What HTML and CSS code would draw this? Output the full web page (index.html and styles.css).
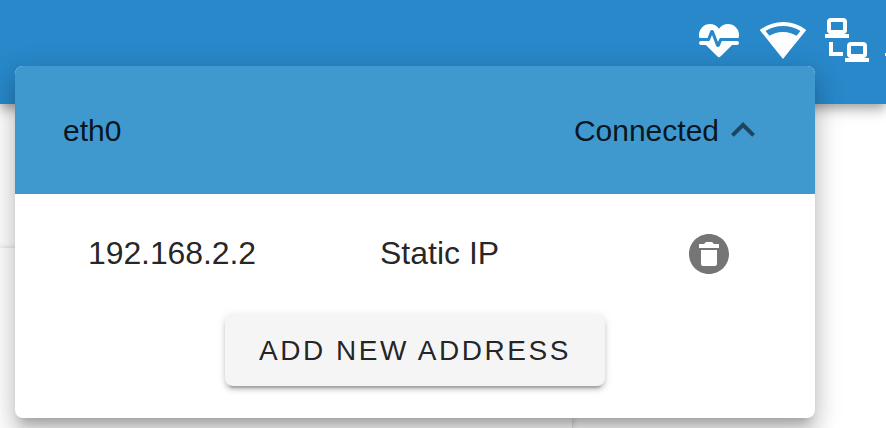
FILE: index.html
```
<!DOCTYPE html>
<html lang="en">
<head>
<meta charset="utf-8">
<title>Network</title>
<link rel="stylesheet" href="styles.css">
</head>
<body>
<header class="app-bar">
  <svg class="icon" viewBox="0 0 24 24"><path d="M7.5,4A5.5,5.5 0 0,0 2,9.5C2,10 2.09,10.5 2.22,11H6.3L7.57,7.63C7.87,6.83 9.05,6.75 9.43,7.63L11.5,13L12.09,11.58C12.22,11.25 12.57,11 13,11H21.78C21.91,10.5 22,10 22,9.5A5.5,5.5 0 0,0 16.5,4C14.64,4 13,4.93 12,6.34C11,4.93 9.36,4 7.5,4V4M3,12.5A1,1 0 0,0 2,13.5A1,1 0 0,0 3,14.5H5.44L11,20C12,20.9 12,20.9 13,20L18.56,14.5H21A1,1 0 0,0 22,13.5A1,1 0 0,0 21,12.5H13.4L12.47,14.8C12.07,15.81 10.92,15.67 10.55,14.83L8.5,9.5L7.54,11.83C7.39,12.21 7.05,12.5 6.6,12.5H3Z"/></svg>
  <svg class="icon" viewBox="0 0 24 24"><path d="M12,3C7.79,3 3.7,4.41 0.38,7C4.41,12.06 7.89,16.37 12,21.5C16.08,16.42 20.24,11.24 23.65,7C20.32,4.41 16.22,3 12,3M12,5C15.07,5 18.09,5.86 20.71,7.45L18.77,9.88C17.26,9 14.88,8 12,8C9,8 6.68,9 5.21,9.84L3.27,7.44C5.91,5.85 8.93,5 12,5Z"/></svg>
  <svg class="icon" viewBox="0 0 24 24"><path fill-rule="evenodd" d="M4,1H10A2,2 0 0,1 12,3V7A2,2 0 0,1 10.5,9H13V11H1V9H3.5A2,2 0 0,1 2,7V3A2,2 0 0,1 4,1M4,3V7H10V3ZM3,13H5V18H10V20H3ZM14,13H20A2,2 0 0,1 22,15V19A2,2 0 0,1 20.5,21H23V23H11V21H13.5A2,2 0 0,1 12,19V15A2,2 0 0,1 14,13M14,15V19H20V15Z"/></svg>
  <svg class="icon icon-edge" viewBox="0 0 .5 24"><path d="M0,18.5H.5V20H0Z"/></svg>
</header>
<main class="page">
  <section class="card card-top"></section>
  <section class="card card-bottom"></section>
</main>
<div class="menu">
  <div class="menu-header">
    <span class="iface">eth0</span>
    <span class="status">Connected</span>
    <svg class="chevron" viewBox="0 0 24 24"><path d="M7.41,15.41L12,10.83L16.59,15.41L18,14L12,8L6,14L7.41,15.41Z"/></svg>
  </div>
  <div class="address-row">
    <span class="ip">192.168.2.2</span>
    <span class="mode">Static IP</span>
    <svg class="delete" viewBox="0 0 24 24"><path d="M12,2C17.53,2 22,6.47 22,12C22,17.53 17.53,22 12,22C6.47,22 2,17.53 2,12C2,6.47 6.47,2 12,2M17,7H14.5L13.5,6H10.5L9.5,7H7V9H17V7M9,18H15A1,1 0 0,0 16,17V10H8V17A1,1 0 0,0 9,18Z"/></svg>
  </div>
  <button class="add">ADD NEW ADDRESS</button>
</div>
</body>
</html>
```
FILE: styles.css
```
* { box-sizing: border-box; }
body {
  margin: 0;
  height: 428px;
  overflow: hidden;
  background: #fff;
  font-family: "Liberation Sans", Arial, sans-serif;
  color: rgba(0, 0, 0, .87);
}
.app-bar {
  position: relative;
  z-index: 1;
  display: flex;
  gap: 16px;
  height: 104px;
  padding: 16px 0 0 695px;
  background: #2888c9;
  box-shadow: 0 4px 8px -2px rgba(0,0,0,.2), 0 8px 10px rgba(0,0,0,.14), 0 2px 20px rgba(0,0,0,.12);
}
.icon { flex: none; width: 48px; height: 48px; fill: #fff; }
.icon-edge { width: 1px; margin-left: -2px; }
.page { width: 573px; }
.card { background: #fff; }
.card-top { height: 144px; box-shadow: inset 0 -4px 4px -2px rgba(0,0,0,.06); }
.card-bottom { height: 180px; border-right: 1px solid #e4e4e4; box-shadow: 2px 0 4px rgba(0,0,0,.08); }
.menu {
  position: absolute;
  z-index: 2;
  left: 15px;
  top: 66px;
  width: 800px;
  height: 352px;
  display: flex;
  flex-direction: column;
  background: #fff;
  border-radius: 8px;
  overflow: hidden;
  box-shadow: 0 10px 10px -6px rgba(0,0,0,.2), 0 16px 20px 2px rgba(0,0,0,.14), 0 6px 28px 4px rgba(0,0,0,.12);
}
.menu-header {
  display: flex;
  align-items: center;
  height: 128px;
  padding: 0 48px;
  background: #3f98ce;
  font-size: 30px;
}
.iface { flex: 1; padding-top: 2px; }
.status { padding-top: 2px; }
.chevron { width: 48px; height: 48px; fill: rgba(0,0,0,.54); }
.address-row {
  display: grid;
  grid-template-columns: 293px 305px 48px;
  align-items: center;
  height: 120px;
  padding-left: 72px;
  font-size: 32px;
}
.ip, .mode { padding-bottom: 2px; }
.ip { padding-left: 1px; letter-spacing: -.1px; }
.delete { width: 48px; height: 48px; fill: #757575; }
.add {
  align-self: center;
  width: 380px;
  height: 72px;
  padding: 2px 0 0;
  border: 0;
  border-radius: 8px;
  background: #f5f5f5;
  color: rgba(0,0,0,.87);
  font: 28px "Liberation Sans", Arial, sans-serif;
  letter-spacing: 2.55px;
  box-shadow: 0 6px 2px -4px rgba(0,0,0,.2), 0 4px 4px rgba(0,0,0,.14), 0 2px 10px rgba(0,0,0,.12);
}
```
